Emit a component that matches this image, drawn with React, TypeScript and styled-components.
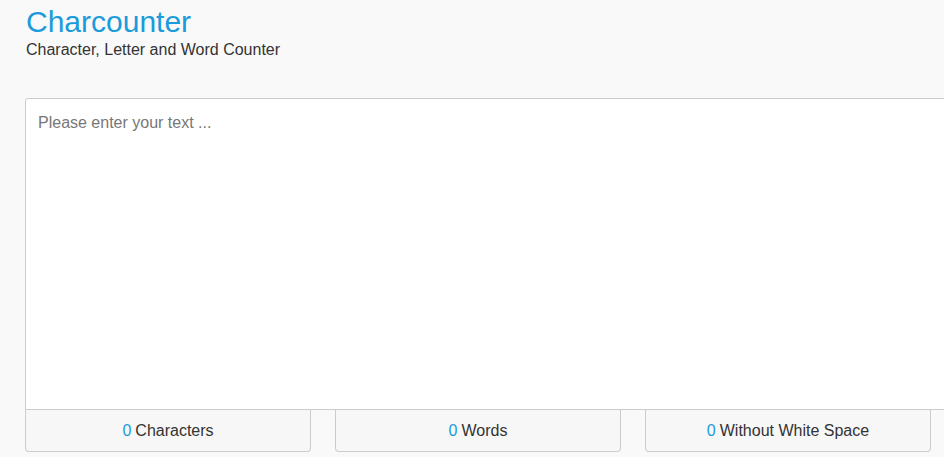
import React, { useState } from "react";
import styled, { createGlobalStyle } from "styled-components";

const GlobalStyle = createGlobalStyle`
  html, body {
    margin: 0;
    padding: 0;
    background: #f9f9f9;
    overflow: hidden;
    font-family: "Liberation Sans", Arial, sans-serif;
    color: #333;
  }
  * { box-sizing: border-box; }
`;

const Page = styled.div`
  padding: 5px 0 0 25px;
  width: 1000px;
`;

const Header = styled.header`
  padding-left: 1px;
`;

const Title = styled.h1`
  margin: 0;
  font-size: 30px;
  line-height: 34px;
  font-weight: 400;
  color: #1a9bdb;
`;

const Subtitle = styled.p`
  margin: 1px 0 0;
  font-size: 16px;
  line-height: 20px;
  color: #333;
`;

const Editor = styled.div`
  margin-top: 38px;
  display: flex;
  flex-direction: column;
`;

const TextInput = styled.textarea`
  display: block;
  width: 940px;
  height: 312px;
  margin: 0;
  padding: 12px;
  border: 1px solid #cccccc;
  border-radius: 3px 0 0 0;
  background: #fff;
  font-family: "Liberation Sans", Arial, sans-serif;
  font-size: 16px;
  line-height: 24px;
  color: #333;
  resize: none;
  outline: none;
  &::placeholder {
    color: #777;
  }
`;

const Stats = styled.div`
  display: grid;
  grid-template-columns: repeat(3, 286px);
  column-gap: 24px;
`;

const StatBox = styled.div`
  height: 42px;
  border: 1px solid #cccccc;
  border-top: none;
  border-radius: 0 0 4px 4px;
  background: #f7f7f7;
  display: flex;
  align-items: center;
  justify-content: center;
  font-size: 16px;
  color: #333;
  padding-top: 1px;
`;

const Num = styled.span`
  color: #1a9bdb;
  margin-right: 4px;
`;

export default function App() {
  const [text, setText] = useState("");
  const chars = text.length;
  const words = text.trim() ? text.trim().split(/\s+/).length : 0;
  const noWs = text.replace(/\s/g, "").length;
  return (
    <>
      <GlobalStyle />
      <Page>
        <Header>
          <Title>Charcounter</Title>
          <Subtitle>Character, Letter and Word Counter</Subtitle>
        </Header>
        <Editor>
          <TextInput
            placeholder="Please enter your text ..."
            value={text}
            onChange={(e) => setText(e.target.value)}
          />
          <Stats>
            <StatBox><Num>{chars}</Num>Characters</StatBox>
            <StatBox><Num>{words}</Num>Words</StatBox>
            <StatBox><Num>{noWs}</Num>Without White Space</StatBox>
          </Stats>
        </Editor>
      </Page>
    </>
  );
}
